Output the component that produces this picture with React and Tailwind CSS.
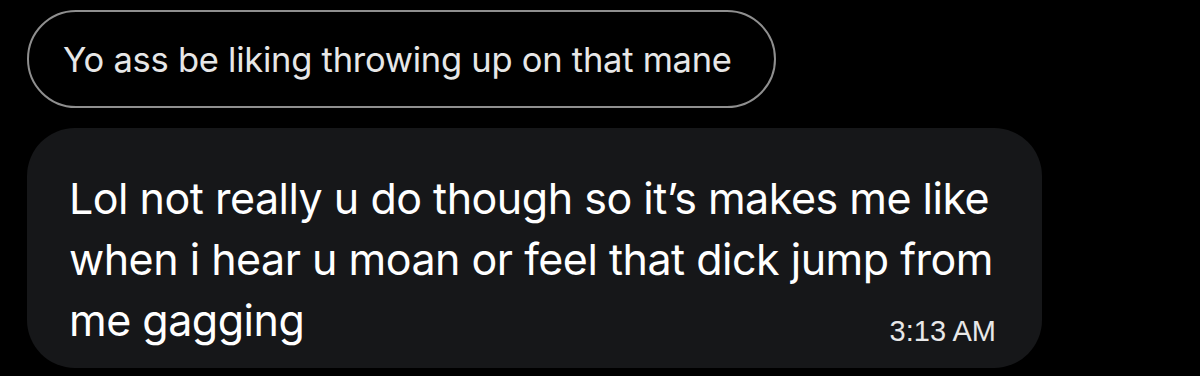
export default function App() {
  return (
    <div className="w-[1200px] h-[376px] bg-black overflow-hidden flex flex-col items-start" style={{ fontFamily: 'Inter, "Noto Sans", sans-serif' }}>
      <div className="ml-[27px] mt-[10px] h-[98px] w-[749px] rounded-full border-2 border-[#8f8f8f] flex items-center pl-[34px]">
        <span className="text-[34.5px] text-[#e7e7e7] tracking-[-0.25px] mt-[1px]">Yo ass be liking throwing up on that mane</span>
      </div>
      <div className="ml-[27px] mt-[20px] w-[1015px] h-[240px] rounded-[48px] bg-[#161719] pl-[42px] pr-[46px] pt-[40px] text-white">
        <div className="text-[43px] leading-[61px] tracking-[-0.5px]">
          <div>Lol not really u do though so it’s makes me like</div>
          <div>when i hear u moan or feel that dick jump from</div>
          <div className="flex items-baseline justify-between">
            <span>me gagging</span>
            <span className="text-[29px] text-[#e8e8e8] tracking-[0px] translate-y-[5px]" style={{ fontFamily: '"Liberation Sans", Arial, sans-serif' }}>3:13 AM</span>
          </div>
        </div>
      </div>
    </div>
  );
}
